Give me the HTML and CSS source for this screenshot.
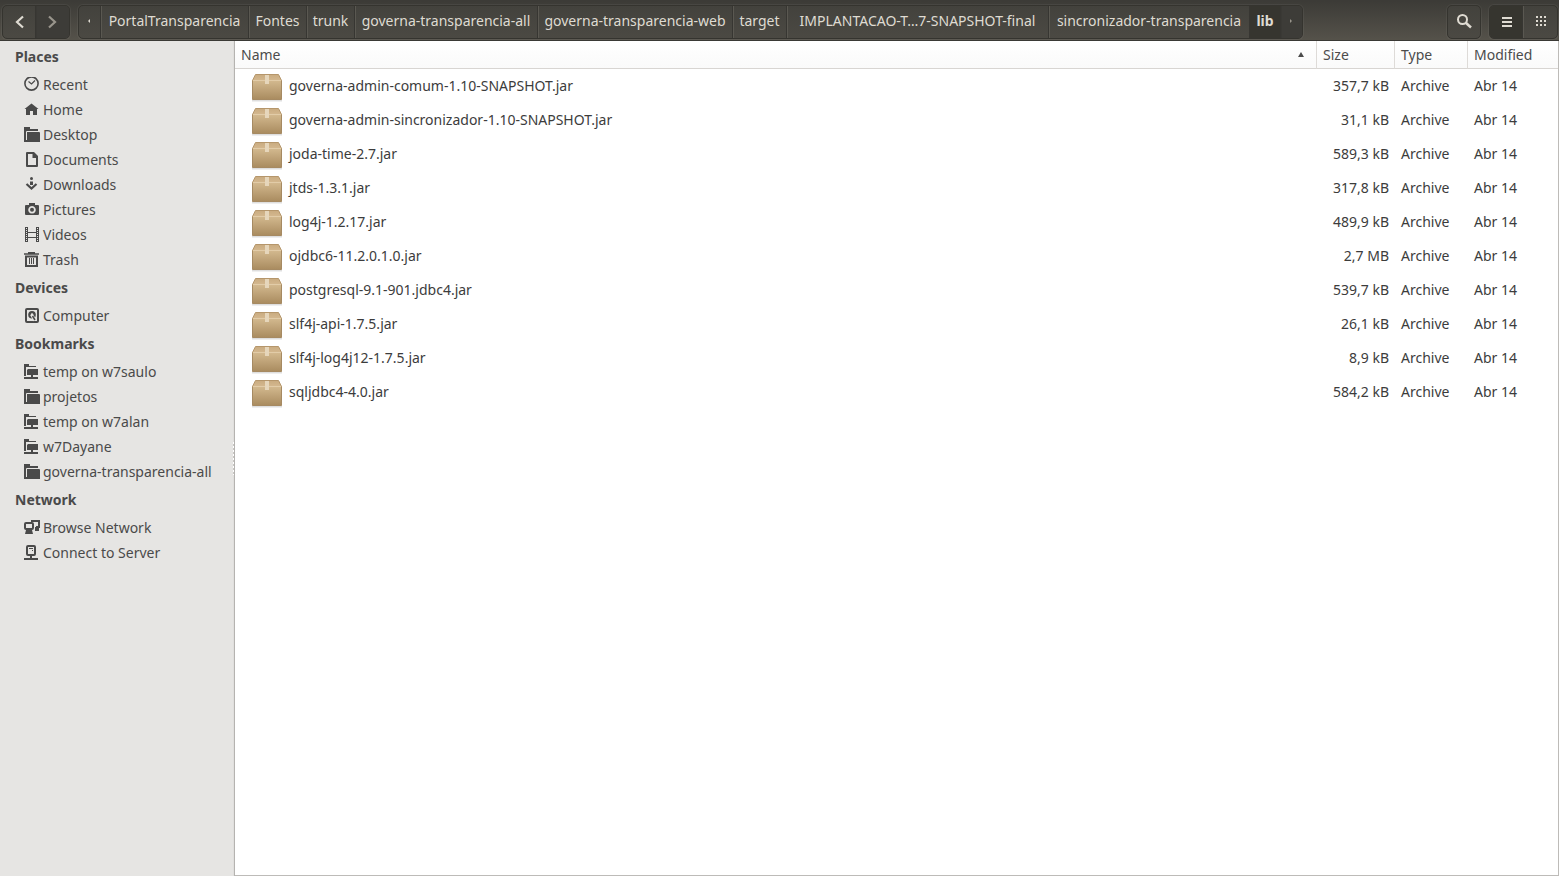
FILE: index.html
```html
<!DOCTYPE html>
<html lang="en">
<head>
<meta charset="utf-8">
<title>lib</title>
<link rel="stylesheet" href="styles.css">
</head>
<body>
<svg class="defs" aria-hidden="true">
  <defs>
    <linearGradient id="box-front" x1="0" y1="0" x2="0" y2="1">
      <stop offset="0" stop-color="#d3b98f"/><stop offset="1" stop-color="#a98b5f"/>
    </linearGradient>
    <linearGradient id="box-top" x1="0" y1="0" x2="0" y2="1">
      <stop offset="0" stop-color="#c9ab80"/><stop offset="1" stop-color="#d4b88f"/>
    </linearGradient>
  </defs>
  <symbol id="package" viewBox="0 0 32 32">
    <path d="M1 30.500h30" stroke="#000" stroke-opacity=".13" stroke-width="2"/>
    <path d="M1.500 10.500h29v19h-29z" fill="url(#box-front)" stroke="#a68a62"/>
    <path d="M4.500 4.500h23l3 6h-29z" fill="url(#box-top)" stroke="#b5966b"/>
    <path d="M2 10.500h28" stroke="#e2cca8"/>
    <path d="M14 5h4v9h-4z" fill="#e6d6bb"/>
  </symbol>
  <symbol id="folder" viewBox="0 0 16 16">
    <path d="M0 0h6v2h8v2H3v11H0z" fill="currentColor"/>
    <path d="M3 5h12q1 0 1 1v9H3z" fill="currentColor"/>
    <path d="M2.500 13V4.500H14" fill="none" stroke="#e6e5e3"/>
  </symbol>
  <symbol id="remote" viewBox="0 0 16 16">
    <path d="M0 0h5v2h7v1H2v9H0z" fill="currentColor"/>
    <path d="M4 5h10v6h-5v2h5v2H0v-2h7v-2H3V6z" fill="currentColor"/>
  </symbol>
</svg>
<div class="window">
  <header class="toolbar">
    <div class="group nav">
      <button type="button" aria-label="Back"><svg viewBox="0 0 16 16" width="16" height="16"><path d="M12 2.500L6 8l6 5.500" fill="none" stroke="currentColor" stroke-width="2.200"/></svg></button>
      <button type="button" class="dim" aria-label="Forward"><svg viewBox="0 0 16 16" width="16" height="16"><path d="M4 2.500L10 8l-6 5.500" fill="none" stroke="currentColor" stroke-width="2.200"/></svg></button>
    </div>
    <nav class="group path" aria-label="Path">
      <button type="button" aria-label="Scroll left"><svg viewBox="0 0 4 4" width="4" height="4"><path d="M3 0v4L1 2z" fill="currentColor"/></svg></button>
      <button type="button">PortalTransparencia</button>
      <button type="button">Fontes</button>
      <button type="button">trunk</button>
      <button type="button">governa-transparencia-all</button>
      <button type="button">governa-transparencia-web</button>
      <button type="button">target</button>
      <button type="button">IMPLANTACAO-T…7-SNAPSHOT-final</button>
      <button type="button">sincronizador-transparencia</button>
      <button type="button" class="active">lib</button>
      <button type="button" class="dim" aria-label="Scroll right"><svg viewBox="0 0 4 4" width="4" height="4"><path d="M1 0v4l2-2z" fill="currentColor"/></svg></button>
    </nav>
    <div class="group search">
      <button type="button" aria-label="Search"><svg viewBox="0 0 16 16" width="16" height="16" fill="none" stroke="currentColor"><circle cx="6.500" cy="5.500" r="4.500" stroke-width="2"/><path d="M9.500 8.500l5.500 5" stroke-width="2.500"/></svg></button>
    </div>
    <div class="group views">
      <button type="button" class="active" aria-label="List view"><svg viewBox="0 0 16 16" width="16" height="16" fill="currentColor"><path d="M3 3h10v2H3zM3 7h10v2H3zM3 11h10v2H3z"/></svg></button>
      <button type="button" aria-label="Icon view"><svg viewBox="0 0 16 16" width="16" height="16" fill="currentColor"><path d="M3 2h2v2H3zM7 2h2v2H7zM11 2h2v2h-2zM3 6h2v2H3zM7 6h2v2H7zM11 6h2v2h-2zM3 10h2v2H3zM7 10h2v2H7zM11 10h2v2h-2z"/></svg></button>
    </div>
  </header>
  <div class="body">
    <aside class="sidebar">
      <h2>Places</h2>
      <ul>
        <li><a href="#"><svg viewBox="0 0 16 16" fill="none" stroke="currentColor"><circle cx="7.500" cy="6.500" r="6.600" stroke-width="1.600"/><path d="M4.500 4.500l3 2.500 3.500-3.500" stroke-width="1.200"/></svg>Recent</a></li>
        <li><a href="#"><svg viewBox="0 0 16 16" fill="currentColor"><path d="M7.500 1.500L14.500 7H13v6H9V9H6v4H2V7H.5z"/></svg>Home</a></li>
        <li><a href="#"><svg><use href="#folder"/></svg>Desktop</a></li>
        <li><a href="#"><svg viewBox="0 0 16 16" fill="currentColor"><path fill-rule="evenodd" d="M3 0h7l4 4v10q0 1-1 1H3q-1 0-1-1V1q0-1 1-1zM4 2v11h8V6H8.500V2z"/></svg>Documents</a></li>
        <li><a href="#"><svg viewBox="0 0 16 16"><circle cx="7.500" cy="1.500" r="1.500" fill="currentColor"/><path d="M6 4.500h3V8H6z" fill="currentColor"/><path d="M2.500 7l5 4.500 5-4.500" fill="none" stroke="currentColor" stroke-width="2.200"/></svg>Downloads</a></li>
        <li><a href="#"><svg viewBox="0 0 16 16" fill="currentColor"><path fill-rule="evenodd" d="M2 3h3V1h6v2h3q1 0 1 1v8q0 1-1 1H2q-1 0-1-1V4q0-1 1-1zM8 4a3.800 3.800 0 1 0 .01 0z"/><circle cx="8" cy="7.800" r="2"/></svg>Pictures</a></li>
        <li><a href="#"><svg viewBox="0 0 16 16" fill="none" stroke="currentColor"><path d="M1.500 0v15M3.500 0v15M12.500 0v15M14.500 0v15M4 5.500h8M4 10.500h8"/><path d="M2 0v16M14 0v16" stroke-width="2" stroke-dasharray="1 1"/></svg>Videos</a></li>
        <li><a href="#"><svg viewBox="0 0 16 16" fill="none" stroke="currentColor"><path d="M0 2h15M4 .5h7" stroke-width="1.500"/><path d="M2 4.500V14h11V4.500z" stroke-width="2"/><path d="M5.500 6v6M7.500 6v6M9.500 6v6"/></svg>Trash</a></li>
      </ul>
      <h2>Devices</h2>
      <ul>
        <li><a href="#"><svg viewBox="0 0 16 16"><rect x="2" y="1" width="12" height="13" rx="1" fill="none" stroke="currentColor" stroke-width="2"/><circle cx="8" cy="6.800" r="3.800" fill="currentColor"/><path d="M7.500 6.500l3.500 6" stroke="#e6e5e3" stroke-width="3"/><circle cx="8" cy="6.500" r="1.200" fill="#e6e5e3"/><path d="M8.500 8l2.500 4" stroke="currentColor" stroke-width="1.500"/></svg>Computer</a></li>
      </ul>
      <h2>Bookmarks</h2>
      <ul>
        <li><a href="#"><svg><use href="#remote"/></svg>temp on w7saulo</a></li>
        <li><a href="#"><svg><use href="#folder"/></svg>projetos</a></li>
        <li><a href="#"><svg><use href="#remote"/></svg>temp on w7alan</a></li>
        <li><a href="#"><svg><use href="#remote"/></svg>w7Dayane</a></li>
        <li><a href="#"><svg><use href="#folder"/></svg>governa-transparencia-all</a></li>
      </ul>
      <h2>Network</h2>
      <ul>
        <li><a href="#"><svg viewBox="0 0 16 16"><rect x="1" y="3" width="8" height="6" rx="1" fill="none" stroke="currentColor" stroke-width="2"/><path d="M2 10h6l1 4H1zM11 7h4v4h-4z" fill="currentColor"/><path d="M7 1h8v6h-3" fill="none" stroke="currentColor" stroke-width="2"/></svg>Browse Network</a></li>
        <li><a href="#"><svg viewBox="0 0 16 16" fill="none" stroke="currentColor"><rect x="3" y="1" width="8" height="9" rx="1" stroke-width="2"/><path d="M5 3.500h4M8 5.500h1"/><path d="M7 10v4M0 14h14" stroke-width="2"/></svg>Connect to Server</a></li>
      </ul>
    </aside>
    <div class="grip"></div>
    <main class="files">
      <table>
        <colgroup><col><col class="c-size"><col class="c-type"><col class="c-mod"></colgroup>
        <thead><tr><th aria-sort="ascending"><div class="sort">Name<svg viewBox="0 0 6 5" width="6" height="5"><path d="M3 0l3 5H0z" fill="currentColor"/></svg></div></th><th>Size</th><th>Type</th><th>Modified</th></tr></thead>
        <tbody>
          <tr><td><div class="file"><svg><use href="#package"/></svg>governa-admin-comum-1.10-SNAPSHOT.jar</div></td><td>357,7 kB</td><td>Archive</td><td>Abr 14</td></tr>
          <tr><td><div class="file"><svg><use href="#package"/></svg>governa-admin-sincronizador-1.10-SNAPSHOT.jar</div></td><td>31,1 kB</td><td>Archive</td><td>Abr 14</td></tr>
          <tr><td><div class="file"><svg><use href="#package"/></svg>joda-time-2.7.jar</div></td><td>589,3 kB</td><td>Archive</td><td>Abr 14</td></tr>
          <tr><td><div class="file"><svg><use href="#package"/></svg>jtds-1.3.1.jar</div></td><td>317,8 kB</td><td>Archive</td><td>Abr 14</td></tr>
          <tr><td><div class="file"><svg><use href="#package"/></svg>log4j-1.2.17.jar</div></td><td>489,9 kB</td><td>Archive</td><td>Abr 14</td></tr>
          <tr><td><div class="file"><svg><use href="#package"/></svg>ojdbc6-11.2.0.1.0.jar</div></td><td>2,7 MB</td><td>Archive</td><td>Abr 14</td></tr>
          <tr><td><div class="file"><svg><use href="#package"/></svg>postgresql-9.1-901.jdbc4.jar</div></td><td>539,7 kB</td><td>Archive</td><td>Abr 14</td></tr>
          <tr><td><div class="file"><svg><use href="#package"/></svg>slf4j-api-1.7.5.jar</div></td><td>26,1 kB</td><td>Archive</td><td>Abr 14</td></tr>
          <tr><td><div class="file"><svg><use href="#package"/></svg>slf4j-log4j12-1.7.5.jar</div></td><td>8,9 kB</td><td>Archive</td><td>Abr 14</td></tr>
          <tr><td><div class="file"><svg><use href="#package"/></svg>sqljdbc4-4.0.jar</div></td><td>584,2 kB</td><td>Archive</td><td>Abr 14</td></tr>
        </tbody>
      </table>
    </main>
  </div>
</div>
</body>
</html>
```
FILE: styles.css
```css
* { box-sizing: border-box; }
body { margin: 0; font: 14px/20px "Noto Sans", "Open Sans", sans-serif; color: #3c3c3c; background: #fff; }
.defs { position: absolute; width: 0; height: 0; }
.window { display: flex; flex-direction: column; min-height: 100vh; }

.toolbar { display: flex; align-items: center; padding: 2px 1px 0 2px; height: 41px; border-top: 1px solid #3c3b37; border-bottom: 1px solid #3a3935; background: linear-gradient(#3c3b37, #55524a); }
.group { display: flex; height: 34px; border: 1px solid #35342f; border-radius: 5px; overflow: hidden; background: linear-gradient(#43423d, #4b4943); box-shadow: 0 0 0 1px rgba(255, 255, 255, .05); }
.group button { display: flex; align-items: center; justify-content: center; min-width: 0; padding: 0; border: 0; border-left: 1px solid #5a5851; box-shadow: inset -1px 0 #373632; background: none; color: #dfdbd2; font: inherit; white-space: nowrap; }
.group button:first-child { border-left: 0; }
.group button:last-child { box-shadow: none; }
.nav button { flex: 1; }
.nav { width: 68px; }
.group .dim { background: #3d3c38; color: #99958c; border-left-color: #3a3935; }
.group .active { background: #36352f; border-left-color: #36352f; font-weight: bold; }
.path { display: grid; grid-template-columns: 22px 148px 58px 48px 183px 195px 54px 262px 201px 31px 21px; margin-left: 8px; }
.path button { padding: 0 2px 2px 0; }
.search { width: 34px; margin-left: auto; }
.search button { flex: 1; }
.views { width: 69px; margin-left: 8px; }
.views button { flex: 1; }

.body { flex: 1; display: flex; }
.sidebar { width: 233px; background: #e6e5e3; color: #4a4a4a; flex: none; }
.sidebar h2 { margin: 0; padding: 0 0 0 15px; font-size: 14px; line-height: 31px; }
.sidebar ul { margin: 0; padding: 0; list-style: none; }
.sidebar a { display: flex; align-items: center; gap: 3px; height: 25px; padding-left: 24px; color: inherit; text-decoration: none; white-space: nowrap; }
.sidebar svg { width: 16px; height: 16px; flex: none; }
.grip { display: flex; align-items: center; width: 2px; background: #e0dfdd; border-right: 1px solid #b5b3b0; flex: none; }
.grip::before { content: ""; width: 1px; height: 33px; background: repeating-linear-gradient(#fff 0 2px, #c8c6c3 2px 4px); }

.files { flex: 1; min-width: 0; border-right: 1px solid #bdbbb8; border-bottom: 1px solid #bdbbb8; background: #fff; }
table { width: 100%; table-layout: fixed; border-collapse: separate; border-spacing: 0; }
.c-size { width: 78px; }
.c-type { width: 73px; }
.c-mod { width: 90px; }
th { height: 28px; padding: 0 6px; border-bottom: 1px solid #d8d5d2; border-right: 1px solid #dedbd8; background: linear-gradient(#fff, #fafafa); color: #4c4c4c; font-weight: normal; text-align: left; }
th:last-child { border-right: 0; }
.sort { display: flex; align-items: center; justify-content: space-between; padding-right: 6px; }
td { height: 34px; padding: 0 6px; white-space: nowrap; }
td:first-child { padding-left: 16px; }
td:nth-child(2) { text-align: right; }
.file { display: flex; align-items: center; gap: 6px; }
.file svg { width: 32px; height: 32px; flex: none; }
```
